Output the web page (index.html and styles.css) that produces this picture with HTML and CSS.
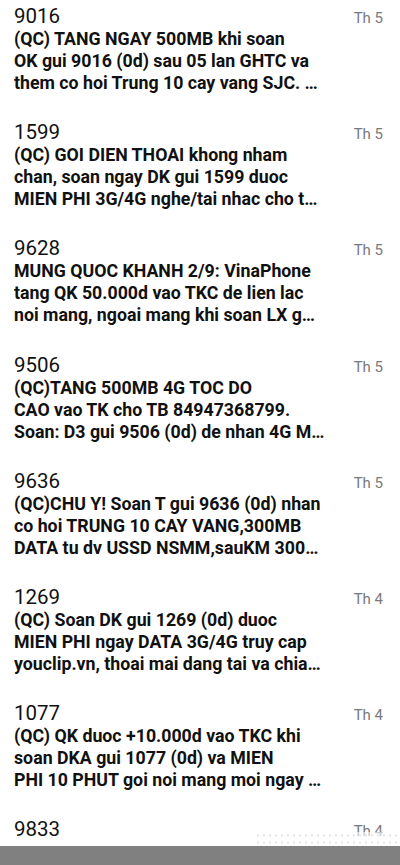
FILE: index.html
```html
<!DOCTYPE html>
<html lang="vi">
<head>
  <meta charset="UTF-8">
  <title>Tin nhắn</title>
  <link rel="stylesheet" href="styles.css">
</head>
<body>

<!--danh sach tin nhan-->
<ul class="list">
  <li class="msg">
    <div class="head"><span class="from">9016</span><span class="time">Th 5</span></div>
    <div class="text">
      <p>(QC) TANG NGAY 500MB khi soan</p>
      <p>OK gui 9016 (0d) sau 05 lan GHTC va</p>
      <p>them co hoi Trung 10 cay vang SJC. …</p>
    </div>
  </li>
  <li class="msg">
    <div class="head"><span class="from">1599</span><span class="time">Th 5</span></div>
    <div class="text">
      <p>(QC) GOI DIEN THOAI khong nham</p>
      <p>chan, soan ngay DK gui 1599 duoc</p>
      <p>MIEN PHI 3G/4G nghe/tai nhac cho t…</p>
    </div>
  </li>
  <li class="msg">
    <div class="head"><span class="from">9628</span><span class="time">Th 5</span></div>
    <div class="text">
      <p>MUNG QUOC KHANH 2/9: VinaPhone</p>
      <p>tang QK 50.000d vao TKC de lien lac</p>
      <p>noi mang, ngoai mang khi soan LX g…</p>
    </div>
  </li>
  <li class="msg">
    <div class="head"><span class="from">9506</span><span class="time">Th 5</span></div>
    <div class="text">
      <p>(QC)TANG 500MB 4G TOC DO</p>
      <p>CAO vao TK cho TB 84947368799.</p>
      <p>Soan: D3 gui 9506 (0d) de nhan 4G M…</p>
    </div>
  </li>
  <li class="msg">
    <div class="head"><span class="from">9636</span><span class="time">Th 5</span></div>
    <div class="text">
      <p>(QC)CHU Y! Soan T gui 9636 (0d) nhan</p>
      <p>co hoi TRUNG 10 CAY VANG,300MB</p>
      <p>DATA tu dv USSD NSMM,sauKM 300…</p>
    </div>
  </li>
  <li class="msg">
    <div class="head"><span class="from">1269</span><span class="time">Th 4</span></div>
    <div class="text">
      <p>(QC) Soan DK gui 1269 (0d) duoc</p>
      <p>MIEN PHI ngay DATA 3G/4G truy cap</p>
      <p>youclip.vn, thoai mai dang tai va chia…</p>
    </div>
  </li>
  <li class="msg">
    <div class="head"><span class="from">1077</span><span class="time">Th 4</span></div>
    <div class="text">
      <p>(QC) QK duoc +10.000d vao TKC khi</p>
      <p>soan DKA gui 1077 (0d) va MIEN</p>
      <p>PHI 10 PHUT goi noi mang moi ngay …</p>
    </div>
  </li>
  <li class="msg">
    <div class="head"><span class="from">9833</span><span class="time">Th 4</span></div>
  </li>
</ul>

<!--cham mo va thanh xam duoi cung-->
<div class="fade"></div>
<div class="bar"></div>

</body>
</html>
```

FILE: styles.css
```css
* {
  margin: 0;
  padding: 0;
  list-style: none;
}

html,
body {
  height: 100%;
  overflow: hidden;
}

body {
  background-color: #fff;
  font-family: Roboto, "Noto Sans", sans-serif;
  color: #111;
}

.msg {
  height: 116.2px;
  padding: 4px 17px 0 14px;
  box-sizing: border-box;
}

.head {
  display: flex;
  justify-content: space-between;
  align-items: baseline;
  height: 24px;
}

.from {
  font-size: 20.5px;
  line-height: 24px;
  color: #111;
}

.time {
  font-size: 15px;
  color: #7a7a7a;
}

.text p {
  font-size: 17.75px;
  line-height: 22px;
  font-weight: bold;
  white-space: nowrap;
  overflow: hidden;
}

/*cac cham nho phia tren thanh xam*/
.fade {
  position: fixed;
  left: 255px;
  right: 0;
  bottom: 19px;
  height: 14px;
  background-image: radial-gradient(circle, #e4e4e4 1px, transparent 1.2px);
  background-size: 6px 7px;
  background-color: rgba(255, 255, 255, 0.6);
}

.bar {
  position: fixed;
  left: 0;
  right: 0;
  bottom: 0;
  height: 19px;
  background-color: #808080;
}
```
